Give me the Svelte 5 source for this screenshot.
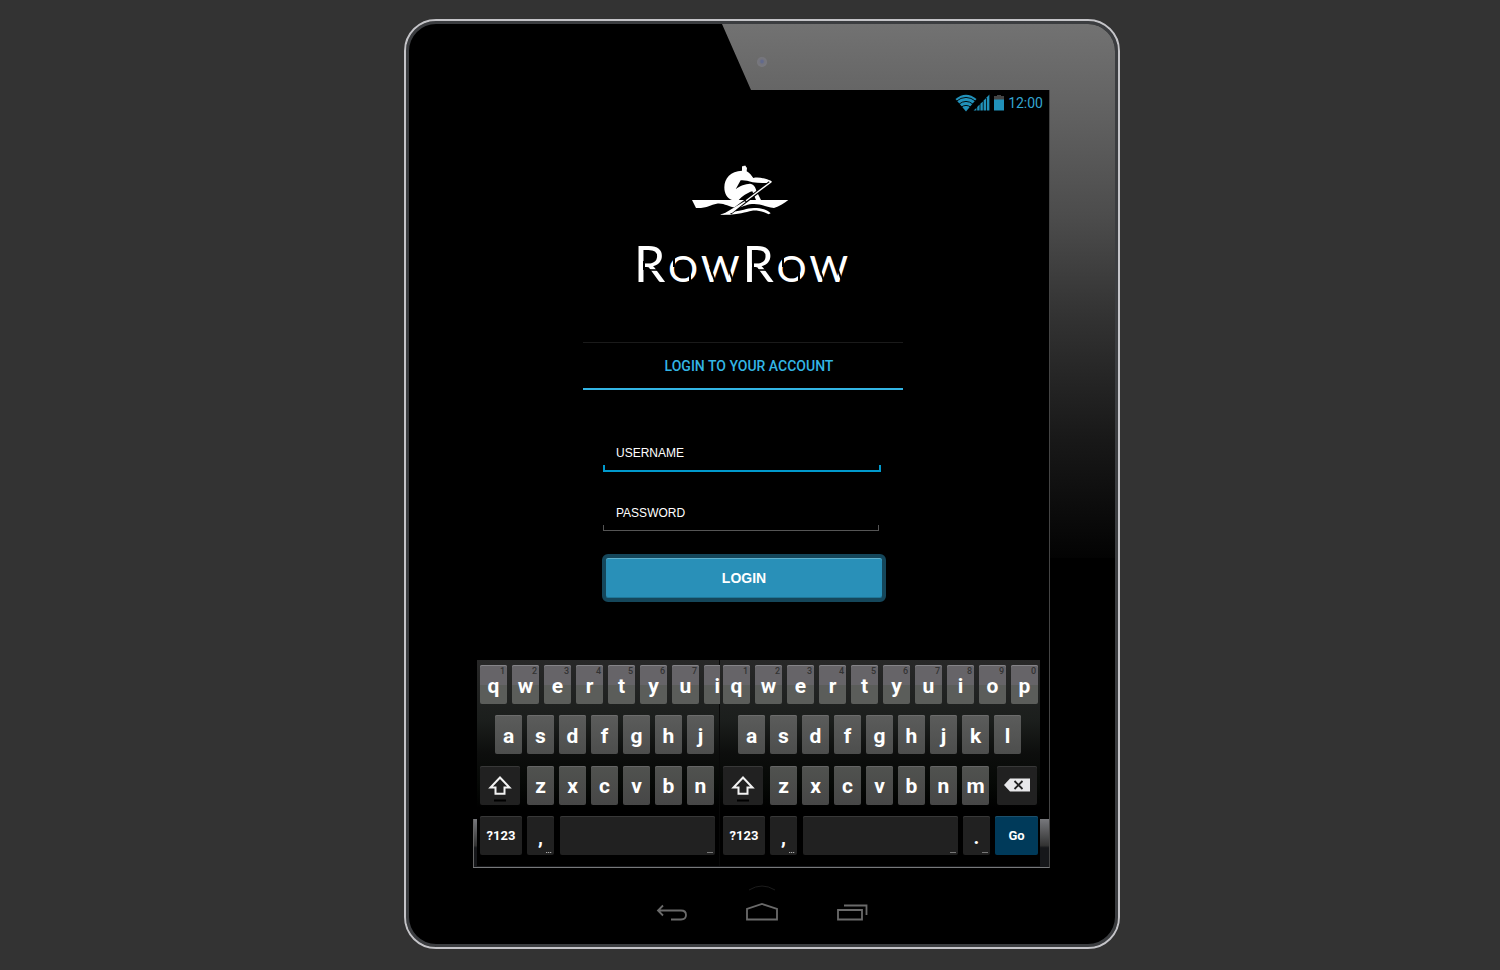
<script>
  const top = [...'qwertyuiop'];
  const middle = [...'asdfghjkl'];
  const bottom = [...'zxcvbnm'];

  let username = $state('');
  let password = $state('');
</script>

{#snippet keys(full)}
  <div class="keys">
    <div class="row">
      {#each full ? top : top.slice(0, 7) as letter, i}
        <button type="button" class="key letter bright">
          {letter}<small>{(i + 1) % 10}</small>
        </button>
      {/each}
      {#if !full}
        <button type="button" class="key letter bright partial">i</button>
      {/if}
    </div>
    <div class="row inset">
      {#each full ? middle : middle.slice(0, 7) as letter}
        <button type="button" class="key letter">{letter}</button>
      {/each}
    </div>
    <div class="row">
      <button type="button" class="key dark shift" aria-label="Shift">
        <svg width="26" height="28" viewBox="0 0 26 28">
          <path d="M13 3.5 L22.5 13.5 H17.5 V19.8 H8.5 V13.5 H3.5 Z" fill="none" stroke="#f2f2f2" stroke-width="2" />
          <path d="M7 26.5 H19" stroke="#000" stroke-width="2" />
        </svg>
      </button>
      {#each full ? bottom : bottom.slice(0, 6) as letter}
        <button type="button" class="key letter dim">{letter}</button>
      {/each}
      {#if full}
        <button type="button" class="key dark erase" aria-label="Delete">
          <svg width="28" height="16" viewBox="0 0 28 16">
            <path d="M1 8 L7 1.5 H27 V14.5 H7 Z" fill="#e8e8ea" />
            <path d="M11.5 4 L19.5 12 M19.5 4 L11.5 12" stroke="#222" stroke-width="1.8" />
          </svg>
        </button>
      {/if}
    </div>
    <div class="row">
      <button type="button" class="key dark symbols">?123</button>
      <button type="button" class="key dark mark">,<i class="dots"></i></button>
      <button type="button" class="key dark space" aria-label="Space"><i class="dash"></i></button>
      {#if full}
        <button type="button" class="key dark mark">.<i class="dash"></i></button>
        <button type="button" class="key go">Go</button>
      {/if}
    </div>
  </div>
{/snippet}

<div class="page">
  <div class="tablet">
    <div class="glare"></div>
    <div class="camera"></div>

    <main class="screen">
      <div class="status">
        <svg width="35" height="18" viewBox="0 0 35 18">
          <path d="M0.5 5 Q11 -3.6 21.5 5 L11 17.6 Z" fill="#2191ba" />
          <g fill="none" stroke="#000" stroke-width="0.9">
            <path d="M1 7.4 Q11 -0.6 21 7.4" />
            <path d="M3.6 10.4 Q11 4.4 18.4 10.4" />
            <path d="M6 13.3 Q11 9.5 16 13.3" />
          </g>
          <g fill="#2191ba">
            <path d="M18.6 16.5 L21.4 14 V16.5 Z" />
            <path d="M22.2 13 L24.6 10.6 V16.5 H22.2 Z" />
            <path d="M25.4 9.8 L27.8 7.4 V16.5 H25.4 Z" />
            <path d="M28.6 6.6 L31 4.2 V16.5 H28.6 Z" />
            <path d="M31.8 3.2 L34.4 0.6 V16.5 H31.8 Z" />
          </g>
        </svg>
        <svg width="10" height="16" viewBox="0 0 10 16">
          <path d="M3 0 H7 V1 H10 V5 H0 V1 H3 Z" fill="#444" />
          <path d="M0 4.5 H10 V15.5 H0 Z" fill="#2191ba" />
        </svg>
        <span>12:00</span>
      </div>

      <section class="login">
        <svg class="emblem" width="140" height="80" viewBox="0 0 420 240" role="img" aria-label="Rower">
          <g fill="#fff">
            <path d="M216 49 H220 L221 47 H227 L228 51 L231 53 L230 64 C238 68 244 76 250 84 C266 80 288 86 306 94 L300 98 C282 99 264 99 248 97 C234 92 222 90 212 91 L197 118 C210 106 226 102 240 101 C250 102 256 110 259 122 L273 150 H258 L247 124 C232 128 216 140 206 150 H186 C172 146 163 132 163 112 C163 84 182 64 216 62 Z" />
            <path d="M66 150 H355 C344 159 328 169 312 174 C288 173 276 160 246 162 C226 164 214 174 196 173 C176 171 162 158 140 161 C122 164 112 175 78 174 Z" />
            <path d="M152 193 L190 184 C216 184 228 174 252 174 C276 174 292 180 302 190 L296 193 C280 184 264 181 246 182 C224 186 204 196 152 194 Z" />
          </g>
          <path d="M300 98 L180 189" stroke="#000" stroke-width="11" />
          <path d="M304 95 L228 152" stroke="#fff" stroke-width="4" />
          <path d="M224 154 L156 194 L186 189 L227 156 Z" fill="#fff" />
        </svg>

        <h1>
          <span>R</span><span class="low">o</span><span class="low">w</span><span>R</span><span class="low">o</span><span class="low">w</span>
          <svg class="cuts" viewBox="0 0 215 52" aria-hidden="true">
            <defs>
              <g id="slits" stroke="#000" stroke-width="2" fill="none">
                <path d="M10 24 V33" />
                <path d="M10 33 H23" stroke-width="1.6" />
                <path d="M40 16 V30 M56 36 V48" />
                <path d="M76 30 L82 47 M94 30 L100 47" />
              </g>
            </defs>
            <use href="#slits" />
            <use href="#slits" x="109" />
          </svg>
        </h1>

        <h2>LOGIN TO YOUR ACCOUNT</h2>

        <form onsubmit={(e) => e.preventDefault()}>
          <label class="field active">
            <input type="text" aria-label="Username" placeholder="USERNAME" bind:value={username} />
          </label>
          <label class="field">
            <input type="password" aria-label="Password" placeholder="PASSWORD" bind:value={password} />
          </label>
          <button class="submit" type="submit">LOGIN</button>
        </form>
      </section>

      <div class="keyboard">
        <div class="pane clipped">{@render keys(false)}</div>
        <div class="pane">{@render keys(true)}</div>
      </div>
    </main>

    <nav>
      <button type="button" aria-label="Back">
        <svg width="32" height="44" viewBox="0 0 32 44">
          <path d="M7 21.5 L2 26.5 L7 31.5 M2 26.5 H25 Q30 26.5 30 31 Q30 35.5 25 35.5 H15" fill="none" stroke="#6a6a6a" stroke-width="1.8" />
        </svg>
      </button>
      <button type="button" aria-label="Home">
        <svg width="34" height="44" viewBox="0 0 34 44">
          <path d="M4 6 Q17 -2 30 6" fill="none" stroke="#1c1c1c" stroke-width="1" />
          <path d="M2 35.5 V25 L17 20 L32 25 V35.5 Z" fill="none" stroke="#6a6a6a" stroke-width="1.8" />
        </svg>
      </button>
      <button type="button" aria-label="Recent apps">
        <svg width="32" height="44" viewBox="0 0 32 44">
          <path d="M2 26 H26 V35.5 H2 Z M8 21.5 H30.5 V31" fill="none" stroke="#6a6a6a" stroke-width="1.8" />
        </svg>
      </button>
    </nav>
  </div>
</div>

<style>
  :global(body) {
    margin: 0;
    background: #333;
  }

  .page {
    box-sizing: border-box;
    min-height: 100vh;
    display: flex;
    justify-content: center;
    align-items: flex-start;
    padding: 19px 0 20px 24px;
    font-family: Roboto, 'Liberation Sans', sans-serif;
  }

  button {
    font-family: inherit;
    margin: 0;
    padding: 0;
    border: 0;
    cursor: pointer;
  }

  .tablet {
    position: relative;
    box-sizing: border-box;
    width: 100%;
    max-width: 716px;
    padding: 69px 68px 0 67px;
    border: 2px solid #c4c4c8;
    border-radius: 32px;
    background: #000;
    box-shadow: inset 0 0 0 3px #3b3d40;
    display: flex;
    flex-direction: column;
    overflow: hidden;
  }

  .glare {
    position: absolute;
    top: 3px;
    right: 3px;
    width: 393px;
    height: 534px;
    border-top-right-radius: 27px;
    background: linear-gradient(#727272 0%, #656565 13%, #4c4c4c 36%, #323232 55%, #181818 78%, #030303 100%);
    clip-path: polygon(0 0, 100% 0, 100% 100%, 50% 100%, 50% 66px, 29px 66px);
  }

  .camera {
    position: absolute;
    top: 36px;
    left: calc(50% - 5px);
    width: 10px;
    height: 10px;
    border-radius: 50%;
    background: radial-gradient(circle at 50% 45%, #626a8c 0 15%, #74747c 35%, #7c7c80 100%);
  }

  .screen {
    position: relative;
    z-index: 0;
    display: flex;
    flex-direction: column;
    background: #000;
    border-right: 1px solid #444;
    border-bottom: 1px solid #77787a;
    padding-left: 4px;
  }

  .screen::after {
    content: '';
    position: absolute;
    z-index: -1;
    left: 0;
    right: 0;
    bottom: 0;
    height: 48px;
    border-left: 1px solid #666;
    background: linear-gradient(#77787c, #333 55%, #16171a 60%);
  }

  .status {
    display: flex;
    justify-content: flex-end;
    align-items: center;
    height: 26px;
    gap: 4px;
    padding-right: 6px;
    font-size: 14px;
    color: #33a5d0;
  }

  .login {
    width: 320px;
    align-self: center;
    margin-right: 40px;
    display: flex;
    flex-direction: column;
    align-items: center;
  }

  .emblem {
    margin-top: 34px;
    margin-right: 6px;
  }

  h1 {
    position: relative;
    display: flex;
    align-items: baseline;
    gap: 3px;
    margin: 7px 4px 0 0;
    font: 400 50px/52px Lato, sans-serif;
    color: #fff;
  }

  .low {
    font-size: 37px;
    font-weight: 500;
    text-transform: uppercase;
  }

  .cuts {
    position: absolute;
    left: 0;
    top: 0;
    width: 215px;
    height: 52px;
  }

  h2 {
    box-sizing: border-box;
    align-self: stretch;
    margin: 48px 0 0;
    padding: 2px 0 0 12px;
    border-top: 1px solid #1a1a1a;
    border-bottom: 2px solid #33b5e5;
    font-size: 14px;
    font-weight: 500;
    line-height: 43px;
    text-align: center;
    color: #33b5e5;
  }

  form {
    align-self: stretch;
    display: flex;
    flex-direction: column;
    padding: 53px 17px 58px 19px;
  }

  .field {
    display: flex;
    flex-direction: column;
    gap: 2px;
    margin: 0 7px 23px 1px;
  }

  .field.active {
    margin: 0 5px 31px 1px;
  }

  .field::after {
    content: '';
    height: 5px;
    border: 1px solid #555;
    border-top: 0;
  }

  .field.active::after {
    border-width: 0 2px 2px;
    border-color: #0099cc;
  }

  input {
    box-sizing: border-box;
    height: 20px;
    padding: 0 13px;
    border: 0;
    outline: 0;
    background: transparent;
    color: #fff;
    font: 12px 'Liberation Sans', Arial, sans-serif;
  }

  input::placeholder {
    color: #fff;
    opacity: 1;
  }

  .submit {
    height: 48px;
    border: 4px solid #15475b;
    border-radius: 6px;
    background: #2990b8;
    box-shadow: inset 0 1px #5fb1cd, inset 0 -1px #1f7798;
    color: #fff;
    font: bold 14px 'Liberation Sans', Arial, sans-serif;
  }

  .keyboard {
    display: flex;
    margin-right: 9px;
    margin-bottom: 1px;
    background: linear-gradient(#282828, #1b1e1c 30%, #0d0e0d 45%, #060906 60%, #000 72%);
  }

  .pane {
    flex: 0 0 320px;
  }

  .pane.clipped {
    flex: 1;
    min-width: 0;
    box-shadow: inset -1px 0 #080808;
  }

  .keys {
    box-sizing: border-box;
    height: 206px;
    padding: 5px 0 11px 3px;
    display: flex;
    flex-direction: column;
    justify-content: space-between;
  }

  .row {
    display: flex;
    gap: 5px;
  }

  .row.inset {
    padding-left: 15px;
  }

  .key {
    position: relative;
    flex: none;
    width: 27px;
    height: 39px;
    border-radius: 2px;
    color: #fff;
    font-weight: 700;
    display: flex;
    justify-content: center;
    align-items: center;
  }

  .letter {
    font-size: 21px;
    background: linear-gradient(#5b5c5b, #4d4e4d);
    box-shadow: inset 0 1px #6c6c6c;
    padding-top: 2px;
  }

  .letter.bright {
    background: linear-gradient(#666468 50%, #5b5d5a 51%);
    box-shadow: inset 0 1px #858488;
  }

  .letter.dim {
    background: linear-gradient(#50524f, #474747);
    box-shadow: inset 0 1px #656565;
  }

  .letter.partial {
    width: 16px;
    justify-content: flex-end;
    border-radius: 2px 0 0 2px;
  }

  .letter small {
    position: absolute;
    top: 0;
    right: 2px;
    font-size: 9px;
    line-height: 12px;
    font-weight: 500;
    color: #333;
  }

  .dark {
    background: #212121;
    box-shadow: inset 0 1px #383838;
  }

  .shift {
    width: 40px;
    margin-right: 2px;
  }

  .shift svg {
    margin-top: 6px;
  }

  .erase {
    width: 40px;
    margin-left: 3px;
  }

  .symbols {
    width: 42px;
    font-size: 13px;
  }

  .mark {
    font-size: 20px;
    padding-top: 3px;
  }

  .space {
    width: 155px;
    margin-left: 1px;
  }

  .dots,
  .dash {
    position: absolute;
    right: 2px;
    bottom: 2px;
    width: 6px;
    height: 1px;
    background: #777;
  }

  .dots {
    background: repeating-linear-gradient(90deg, #aaa 0 1px, #444 1px 2px);
  }

  .go {
    width: 43px;
    background: #003a5a;
    box-shadow: inset 0 1px #1c506c;
    font-size: 13px;
  }

  nav {
    display: flex;
    justify-content: center;
    gap: 57px;
    padding: 16px 0 19px;
  }

  nav button {
    display: flex;
    background: transparent;
  }
</style>
